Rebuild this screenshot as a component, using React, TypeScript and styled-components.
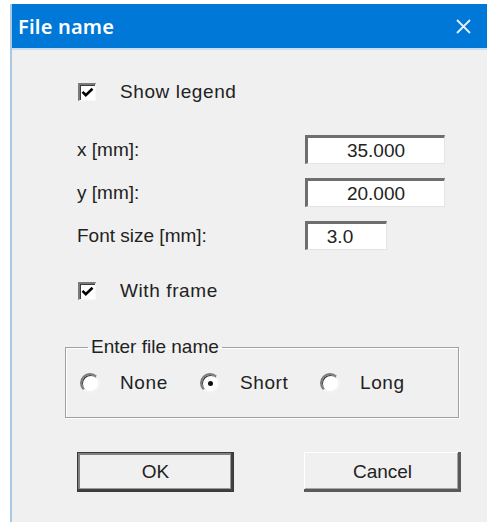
import React from "react";
import styled, { createGlobalStyle } from "styled-components";

const Global = createGlobalStyle`
  html, body { margin: 0; padding: 0; background: #ffffff; }
  body { font-family: "Liberation Sans", Arial, sans-serif; }
`;

const Window = styled.div`
  margin: 4px 0 0 10px;
  width: 477px;
  height: 518px;
  display: flex;
  flex-direction: column;
  background: #f0f0f0;
  border-left: 2px solid #a9c8e4;
  box-sizing: border-box;
`;

const TitleBar = styled.div`
  height: 44px;
  background: #0078d7;
  border-bottom: 2px solid #c9def1;
  display: flex;
  align-items: center;
  justify-content: space-between;
  padding: 0 16px 0 6px;
  flex-shrink: 0;
`;

const Title = styled.span`
  color: #ffffff;
  font-family: "Noto Sans", "Open Sans", sans-serif;
  font-size: 20px;
  font-weight: 600;
  letter-spacing: 0.2px;
  margin-top: 1px;
`;

const CloseIcon = styled.svg`
  width: 15px;
  height: 15px;
`;

const Body = styled.div`
  flex: 1;
  display: flex;
  flex-direction: column;
  padding: 32px 0 0 65px;
  font-size: 19px;
  color: #222222;
`;

const CheckRow = styled.label<{ $mt?: number }>`
  display: flex;
  align-items: center;
  height: 20px;
  margin-top: ${(p) => p.$mt ?? 0}px;
`;

const CheckBox = styled.span`
  width: 18px;
  height: 18px;
  box-sizing: border-box;
  border-top: 2px solid #7a7a7a;
  border-left: 2px solid #7a7a7a;
  border-right: 1px solid #f8f8f8;
  border-bottom: 1px solid #f8f8f8;
  background: #ffffff;
  box-shadow: inset 1px 1px 0 #3c3c3c;
  display: flex;
  align-items: center;
  justify-content: center;
  margin-left: 1px;
`;

const CheckText = styled.span`
  margin-left: 24px;
  letter-spacing: 0.6px;
`;

const FieldRow = styled.div<{ $mt: number }>`
  display: flex;
  align-items: center;
  height: 29px;
  margin-top: ${(p) => p.$mt}px;
`;

const FieldLabel = styled.span`
  width: 228px;
  flex-shrink: 0;
`;

const Input = styled.div<{ $w: number }>`
  width: ${(p) => p.$w}px;
  height: 29px;
  box-sizing: border-box;
  background: #ffffff;
  border-top: 3px solid #6e6e6e;
  border-left: 3px solid #6e6e6e;
  border-right: 1px solid #e4e4e4;
  border-bottom: 1px solid #e4e4e4;
  display: flex;
  align-items: center;
  justify-content: center;
  font-size: 19px;
  padding-right: ${(p) => (p.$w < 100 ? 14 : 0)}px;
`;

const Group = styled.fieldset`
  margin: 36px 0 0 -12px;
  width: 394px;
  height: 81px;
  box-sizing: border-box;
  border: 1px solid #a0a0a0;
  box-shadow: 1px 1px 0 #ffffff, inset 1px 1px 0 #ffffff;
  padding: 16px 0 0 14px;
`;

const Legend = styled.legend`
  padding: 0 3px;
  margin-left: 8px;
  font-size: 19px;
  line-height: 20px;
`;

const RadioRow = styled.div`
  display: flex;
  align-items: center;
  height: 20px;
`;

const Radio = styled.label`
  display: flex;
  align-items: center;
  width: 120px;
`;

const RadioCircle = styled.span<{ $on?: boolean }>`
  width: 20px;
  height: 20px;
  border-radius: 50%;
  box-sizing: border-box;
  background: #ffffff;
  border: 2px solid;
  border-color: #7a7a7a #f4f4f4 #f4f4f4 #7a7a7a;
  box-shadow: inset 1px 1px 0 #404040;
  display: flex;
  align-items: center;
  justify-content: center;
  &::after {
    content: "";
    width: 5px;
    height: 5px;
    border-radius: 50%;
    background: #101010;
    display: ${(p) => (p.$on ? "block" : "none")};
  }
`;

const RadioText = styled.span`
  margin-left: 20px;
  letter-spacing: 0.6px;
`;

const ButtonRow = styled.div`
  display: flex;
  gap: 70px;
  margin-top: 34px;
`;

const Button = styled.button<{ $default?: boolean }>`
  width: 157px;
  height: 40px;
  box-sizing: border-box;
  background: #f0f0f0;
  font-family: "Liberation Sans", Arial, sans-serif;
  font-size: 19px;
  color: #222222;
  padding: 0;
  border: ${(p) => (p.$default ? "1px solid #3a3a3a" : "none")};
  box-shadow: ${(p) =>
    p.$default
      ? "inset -2px -2px 0 #404040, inset 2px 2px 0 #808080, inset -3px -3px 0 #9a9a9a"
      : "inset -3px -3px 0 #5a5a5a, inset 1px 1px 0 #ffffff, inset -4px -4px 0 #a8a8a8"};
`;

const Check = () => (
  <svg width="13" height="11" viewBox="0 0 13 11">
    <path d="M1.5 4.8 L4.8 8.2 L11.5 1.8" stroke="#000" strokeWidth="2.6" fill="none" />
  </svg>
);

export default function App() {
  return (
    <>
      <Global />
      <Window>
        <TitleBar>
          <Title>File name</Title>
          <CloseIcon viewBox="0 0 15 15">
            <path d="M1 1 L14 14 M14 1 L1 14" stroke="#e6f1fb" strokeWidth="1.8" />
          </CloseIcon>
        </TitleBar>
        <Body>
          <CheckRow $mt={0}>
            <CheckBox>
              <Check />
            </CheckBox>
            <CheckText>Show legend</CheckText>
          </CheckRow>
          <FieldRow $mt={33}>
            <FieldLabel>x [mm]:</FieldLabel>
            <Input $w={140}>35.000</Input>
          </FieldRow>
          <FieldRow $mt={14}>
            <FieldLabel>y [mm]:</FieldLabel>
            <Input $w={140}>20.000</Input>
          </FieldRow>
          <FieldRow $mt={14}>
            <FieldLabel>Font size [mm]:</FieldLabel>
            <Input $w={82}>3.0</Input>
          </FieldRow>
          <CheckRow $mt={31}>
            <CheckBox>
              <Check />
            </CheckBox>
            <CheckText>With frame</CheckText>
          </CheckRow>
          <Group>
            <Legend>Enter file name</Legend>
            <RadioRow>
              <Radio>
                <RadioCircle />
                <RadioText>None</RadioText>
              </Radio>
              <Radio>
                <RadioCircle $on />
                <RadioText>Short</RadioText>
              </Radio>
              <Radio>
                <RadioCircle />
                <RadioText>Long</RadioText>
              </Radio>
            </RadioRow>
          </Group>
          <ButtonRow>
            <Button $default>OK</Button>
            <Button>Cancel</Button>
          </ButtonRow>
        </Body>
      </Window>
    </>
  );
}
